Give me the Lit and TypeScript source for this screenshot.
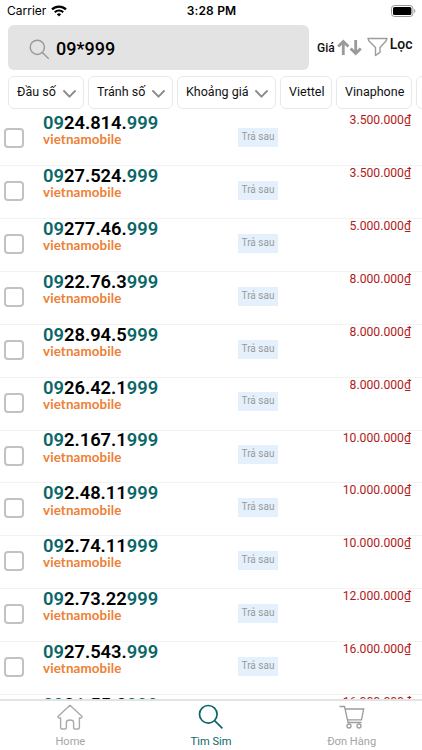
import { LitElement, html, css, svg } from "lit";
import { customElement, property } from "lit/decorators.js";

interface Sim {
  middle: string;
  price: string;
}

const sims: Sim[] = [
  { middle: "24.814.", price: "3.500.000" },
  { middle: "27.524.", price: "3.500.000" },
  { middle: "277.46.", price: "5.000.000" },
  { middle: "22.76.3", price: "8.000.000" },
  { middle: "28.94.5", price: "8.000.000" },
  { middle: "26.42.1", price: "8.000.000" },
  { middle: "2.167.1", price: "10.000.000" },
  { middle: "2.48.11", price: "10.000.000" },
  { middle: "2.74.11", price: "10.000.000" },
  { middle: "2.73.22", price: "12.000.000" },
  { middle: "27.543.", price: "16.000.000" },
  { middle: "21.55.8", price: "16.000.000" },
];

const magnifier = svg`<circle cx="10.3" cy="10.3" r="8.8"/><path d="M16.6 16.6 24.4 24.4"/>`;

@customElement("status-bar")
export class StatusBar extends LitElement {
  static styles = css`
    :host { display: grid; grid-template-columns: 1fr auto 1fr; align-items: center; height: 25px; padding: 0 6px 3px 7px; box-sizing: border-box; font: 400 12px/22px Inter, sans-serif; color: #000; }
    .left { display: flex; align-items: center; gap: 5px; }
    .time { font-weight: 600; letter-spacing: 0.15px; }
    .battery { justify-self: end; display: block; }
    svg { display: block; }
  `;
  render() {
    return html`
      <div class="left"><span>Carrier</span>
        <svg width="16" height="12" viewBox="0 0 16 12" fill="none" stroke="#000" stroke-width="2.2"><path d="M1 4.4a10 10 0 0 1 14 0"/><path d="M3.8 7.2a6 6 0 0 1 8.4 0"/><path d="M8 11.6 5.8 9.3a3.2 3.2 0 0 1 4.4 0z" fill="#000" stroke="none"/></svg>
      </div>
      <span class="time">3:28 PM</span>
      <svg class="battery" width="25" height="12" viewBox="0 0 25 12"><rect x=".5" y=".5" width="21.4" height="11" rx="3" fill="none" stroke="#999"/><rect x="2" y="2" width="18.4" height="8" rx="1.6"/><path d="M23.2 4v4c1.6-.5 1.6-3.5 0-4z" fill="#999"/></svg>`;
  }
}

@customElement("filter-chip")
export class FilterChip extends LitElement {
  @property() label = "";
  @property({ type: Boolean }) menu = false;
  static styles = css`
    :host { display: flex; flex: none; align-items: center; justify-content: space-between; box-sizing: border-box; height: 33px; padding: 0 7px 1px 8px; border: 1px solid #e9e9e9; border-radius: 6px; background: #fff; font: 400 12.5px/30px Roboto, sans-serif; color: #111; white-space: nowrap; }
    svg { display: block; margin-top: 5px; }
  `;
  render() {
    return html`<span>${this.label}</span>${this.menu
      ? html`<svg width="13" height="8" viewBox="0 0 13 8" fill="none" stroke="#8c8c8c" stroke-width="1.9" stroke-linecap="round" stroke-linejoin="round"><path d="M1 1 6.5 6.7 12 1"/></svg>`
      : ""}`;
  }
}

@customElement("sim-row")
export class SimRow extends LitElement {
  @property({ attribute: false }) sim!: Sim;
  static styles = css`
    :host { display: grid; flex: none; grid-template-columns: 43px 195px 40px 1fr; align-items: start; box-sizing: border-box; height: 52.9px; padding-right: 11px; border-bottom: 1px solid #f3f3f3; font-family: Roboto, sans-serif; }
    .check { box-sizing: border-box; width: 20px; height: 20px; margin: 15px 0 0 4px; border: 2px solid #c2c2c2; border-radius: 4px; }
    .number { margin-top: -0.1px; font-size: 18.35px; line-height: 20px; font-weight: 600; color: #000; white-space: nowrap; }
    .mark { color: #0b6668; }
    .carrier { margin-top: -0.8px; font: 700 13.4px/14px Lato, sans-serif; letter-spacing: 0.1px; color: #ee8035; }
    .tag { height: 19px; margin-top: 14.8px; background: #e4f1fc; font-size: 10px; line-height: 18.6px; text-align: center; color: #999; white-space: nowrap; }
    .price { justify-self: end; font-size: 12.2px; line-height: 14px; color: #b01c20; white-space: nowrap; }
  `;
  render() {
    return html`
      <span class="check"></span>
      <div>
        <div class="number"><span class="mark">09</span>${this.sim.middle}<span class="mark">999</span></div>
        <div class="carrier">vietnamobile</div>
      </div>
      <span class="tag">Trả sau</span>
      <span class="price">${this.sim.price}₫</span>`;
  }
}

@customElement("app-root")
export class AppRoot extends LitElement {
  static styles = css`
    :host { display: flex; flex-direction: column; height: 750px; overflow: hidden; background: #fff; font-family: Roboto, sans-serif; }
    svg { display: block; flex: none; }
    .top { display: flex; flex: none; height: 45px; padding-left: 8px; }
    .search { display: flex; flex: none; align-items: center; box-sizing: border-box; width: 301px; height: 45px; padding: 3px 0 0 21px; border-radius: 6px; background: #e3e3e3; }
    .query { margin: 0 0 0 6px; font-size: 18px; line-height: 24px; font-weight: 500; color: #000; }
    .sort { display: flex; align-items: center; margin-left: 8px; height: 45px; font-size: 12px; font-weight: 500; color: #111; }
    .sort svg { margin: 0 0 1px 2px; }
    .filter { display: flex; margin-left: 5px; font-size: 14px; line-height: 16px; font-weight: 500; color: #111; }
    .filter svg { margin-top: 12px; }
    .filter span { margin: 10.5px 0 0 2px; }
    .chips { display: flex; flex: none; gap: 4px; height: 33px; margin: 5.5px 0 4.7px 8px; overflow: hidden; }
    .w1 { width: 76px; } .w2 { width: 85px; } .w3 { width: 99px; } .w4 { width: 52px; } .w5 { width: 75.5px; } .w6 { width: 80px; }
    .list { display: flex; flex: 1; min-height: 0; flex-direction: column; overflow: hidden; }
    .tabs { display: grid; flex: none; grid-template-columns: repeat(3, 1fr); box-sizing: border-box; height: 51px; border-top: 2px solid #e3e3e3; background: #fff; }
    .tab { display: flex; flex-direction: column; align-items: center; padding-top: 3px; font-size: 11.1px; line-height: 13px; color: #a5a5a5; }
    .tab svg { margin-bottom: 5px; }
    .active { color: #0b6668; }
  `;
  render() {
    return html`
      <status-bar></status-bar>
      <div class="top">
        <div class="search">
          <svg width="21" height="21" viewBox="0 0 26 26" fill="none" stroke="#999" stroke-width="1.8">${magnifier}</svg>
          <span class="query">09*999</span>
        </div>
        <div class="sort"><span>Giá</span>
          <svg width="25" height="17" viewBox="0 0 25 17" fill="none" stroke="#9a9a9a" stroke-width="2.8"><path d="M6.3 16V2.5M1.2 7.5l5.1-5.1 5.1 5.1M18.7 1v13.5M13.6 9.5l5.1 5.1L23.8 9.5"/></svg>
        </div>
        <div class="filter">
          <svg width="21" height="20" viewBox="0 0 21 20" fill="none" stroke="#9c9c9c" stroke-width="1.4" stroke-linejoin="round"><path d="M1 1.5h19l-.8 2.3-6.2 6.7v4.9l-4.5 3.1v-8L1.8 3.8z"/></svg>
          <span>Lọc</span>
        </div>
      </div>
      <div class="chips">
        <filter-chip class="w1" label="Đầu số" menu></filter-chip>
        <filter-chip class="w2" label="Tránh số" menu></filter-chip>
        <filter-chip class="w3" label="Khoảng giá" menu></filter-chip>
        <filter-chip class="w4" label="Viettel"></filter-chip>
        <filter-chip class="w5" label="Vinaphone"></filter-chip>
        <filter-chip class="w6"></filter-chip>
      </div>
      <div class="list">${sims.map((sim) => html`<sim-row .sim=${sim}></sim-row>`)}</div>
      <div class="tabs">
        <div class="tab">
          <svg width="26" height="26" viewBox="0 0 26 26" fill="none" stroke="#aaa" stroke-width="1.4" stroke-linejoin="round"><path d="M13 1.2 24.8 12.3q.8 1-.8 1.7h-1.6v9.5q0 1.5-1.5 1.5h-3q-1.3 0-1.3-1.3v-5.4q0-2.3-3.6-2.3t-3.6 2.3v5.4Q9.400 25 8.100 25h-3q-1.500 0-1.500-1.500V14H2q-1.600-.7-.8-1.700z"/></svg>
          <span>Home</span>
        </div>
        <div class="tab active">
          <svg width="26" height="26" viewBox="0 0 26 26" fill="none" stroke="currentColor" stroke-width="1.7">${magnifier}</svg>
          <span>Tìm Sim</span>
        </div>
        <div class="tab">
          <svg width="26" height="26" viewBox="0 0 26 26" fill="none" stroke="#9c9c9c" stroke-width="1.3"><path d="M.5 2.5h5l3.600 16h13.400M6 5h18.700l-2.200 10.800H8.500"/><circle cx="10" cy="22" r="2"/><circle cx="20" cy="22" r="2"/></svg>
          <span>Đơn Hàng</span>
        </div>
      </div>`;
  }
}
